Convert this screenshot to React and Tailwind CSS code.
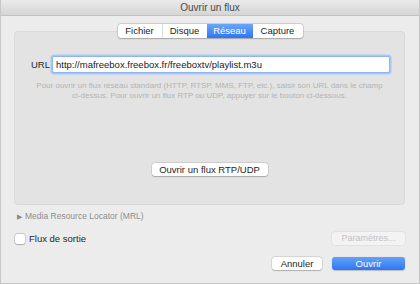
import React from "react";

const tabs = [
  { label: "Fichier", w: "w-[44px]" },
  { label: "Disque", w: "w-[45px]" },
  { label: "Réseau", w: "w-[46px]", active: true },
  { label: "Capture", w: "w-[50px]" },
];

export default function App() {
  return (
    <div className="w-[420px] h-[284px] bg-[#ececec] border-x border-b border-[#c6c6c6] flex flex-col font-['Liberation_Sans',Arial,sans-serif] text-[#262626] overflow-hidden">
      {/* title bar */}
      <div className="h-[16px] shrink-0 bg-gradient-to-b from-[#eaeaea] to-[#d5d5d5] border-b border-[#c2c2c2] flex items-center justify-center text-[10px] leading-none text-[#4a4a4a]">
        Ouvrir un flux
      </div>

      {/* segmented tabs */}
      <div className="relative z-10 mt-[8px] flex justify-center">
        <div className="flex h-[14px] bg-white rounded-[3px] shadow-[0_0_0_0.5px_rgba(0,0,0,0.18),0_0.5px_1.5px_rgba(0,0,0,0.2)] overflow-hidden">
          {tabs.map((t, i) => (
            <div
              key={t.label}
              className={
                "flex items-center justify-center text-[9.5px] leading-none " +
                t.w +
                (t.active
                  ? " bg-gradient-to-b from-[#6aa6f8] to-[#2f74f5] text-white"
                  : " text-[#262626]") +
                (i > 0 && !t.active && !tabs[i - 1].active ? " border-l border-[#dcdcdc]" : "")
              }
            >
              {t.label}
            </div>
          ))}
        </div>
      </div>

      {/* panel */}
      <div className="-mt-[7px] ml-[13px] w-[391px] h-[174px] bg-[#e3e3e3] rounded-[4px] border border-[#dadada] flex flex-col items-center">
        <div className="mt-[24px] w-full flex items-center">
          <span className="ml-[16px] w-[21px] text-[9.5px] leading-none text-[#262626]">URL</span>
          <div className="w-[338px] h-[17px] bg-white rounded-[2px] border border-[#8fb5ee] shadow-[0_0_0_1.5px_#a9c8f4] flex items-center pl-[3px] text-[9.5px] leading-none text-[#1a1a1a]">
            http://mafreebox.freebox.fr/freeboxtv/playlist.m3u
          </div>
        </div>
        <div className="mt-[8px] text-center text-[8px] leading-[9.5px] text-[#b3b3b3] whitespace-nowrap">
          Pour ouvrir un flux réseau standard (HTTP, RTSP, MMS, FTP, etc.), saisir son URL dans le champ
          <br />
          ci-dessus. Pour ouvrir un flux RTP ou UDP, appuyer sur le bouton ci-dessous.
        </div>
        <button className="mt-[63px] w-[116px] h-[13px] bg-white rounded-[3px] shadow-[0_0_0_0.5px_rgba(0,0,0,0.15),0_0.5px_1px_rgba(0,0,0,0.2)] text-[9.5px] leading-none text-[#262626]">
          Ouvrir un flux RTP/UDP
        </button>
      </div>

      {/* MRL disclosure */}
      <div className="mt-[6px] ml-[16px] flex items-center h-[10px] text-[8.5px] leading-none text-[#8c8c8c]">
        <span className="text-[7px] mr-[3px] text-[#8a8a8a]">▶</span>
        Media Resource Locator (MRL)
      </div>

      {/* output row */}
      <div className="mt-[11px] flex items-center h-[13px]">
        <div className="ml-[14px] w-[10px] h-[10px] bg-white rounded-[2px] shadow-[0_0_0_0.5px_rgba(0,0,0,0.25),0_0.5px_1px_rgba(0,0,0,0.15)]" />
        <span className="ml-[4px] text-[9.5px] leading-none text-[#262626]">Flux de sortie</span>
        <button className="ml-auto mr-[14px] w-[73px] h-[13px] bg-[#f3f3f3] rounded-[3px] shadow-[0_0_0_0.5px_rgba(0,0,0,0.08)] text-[9px] leading-none text-[#c2c2c2]">
          Paramètres...
        </button>
      </div>

      {/* action buttons */}
      <div className="mt-[12px] flex items-center justify-end gap-[10px] pr-[14px]">
        <button className="w-[50px] h-[13px] bg-white rounded-[3px] shadow-[0_0_0_0.5px_rgba(0,0,0,0.15),0_0.5px_1px_rgba(0,0,0,0.2)] text-[9.5px] leading-none text-[#262626]">
          Annuler
        </button>
        <button className="w-[73px] h-[13px] bg-gradient-to-b from-[#63a2f8] to-[#2f75f5] rounded-[3px] shadow-[0_0.5px_1px_rgba(0,0,0,0.2)] text-[9.5px] leading-none text-white">
          Ouvrir
        </button>
      </div>
    </div>
  );
}
